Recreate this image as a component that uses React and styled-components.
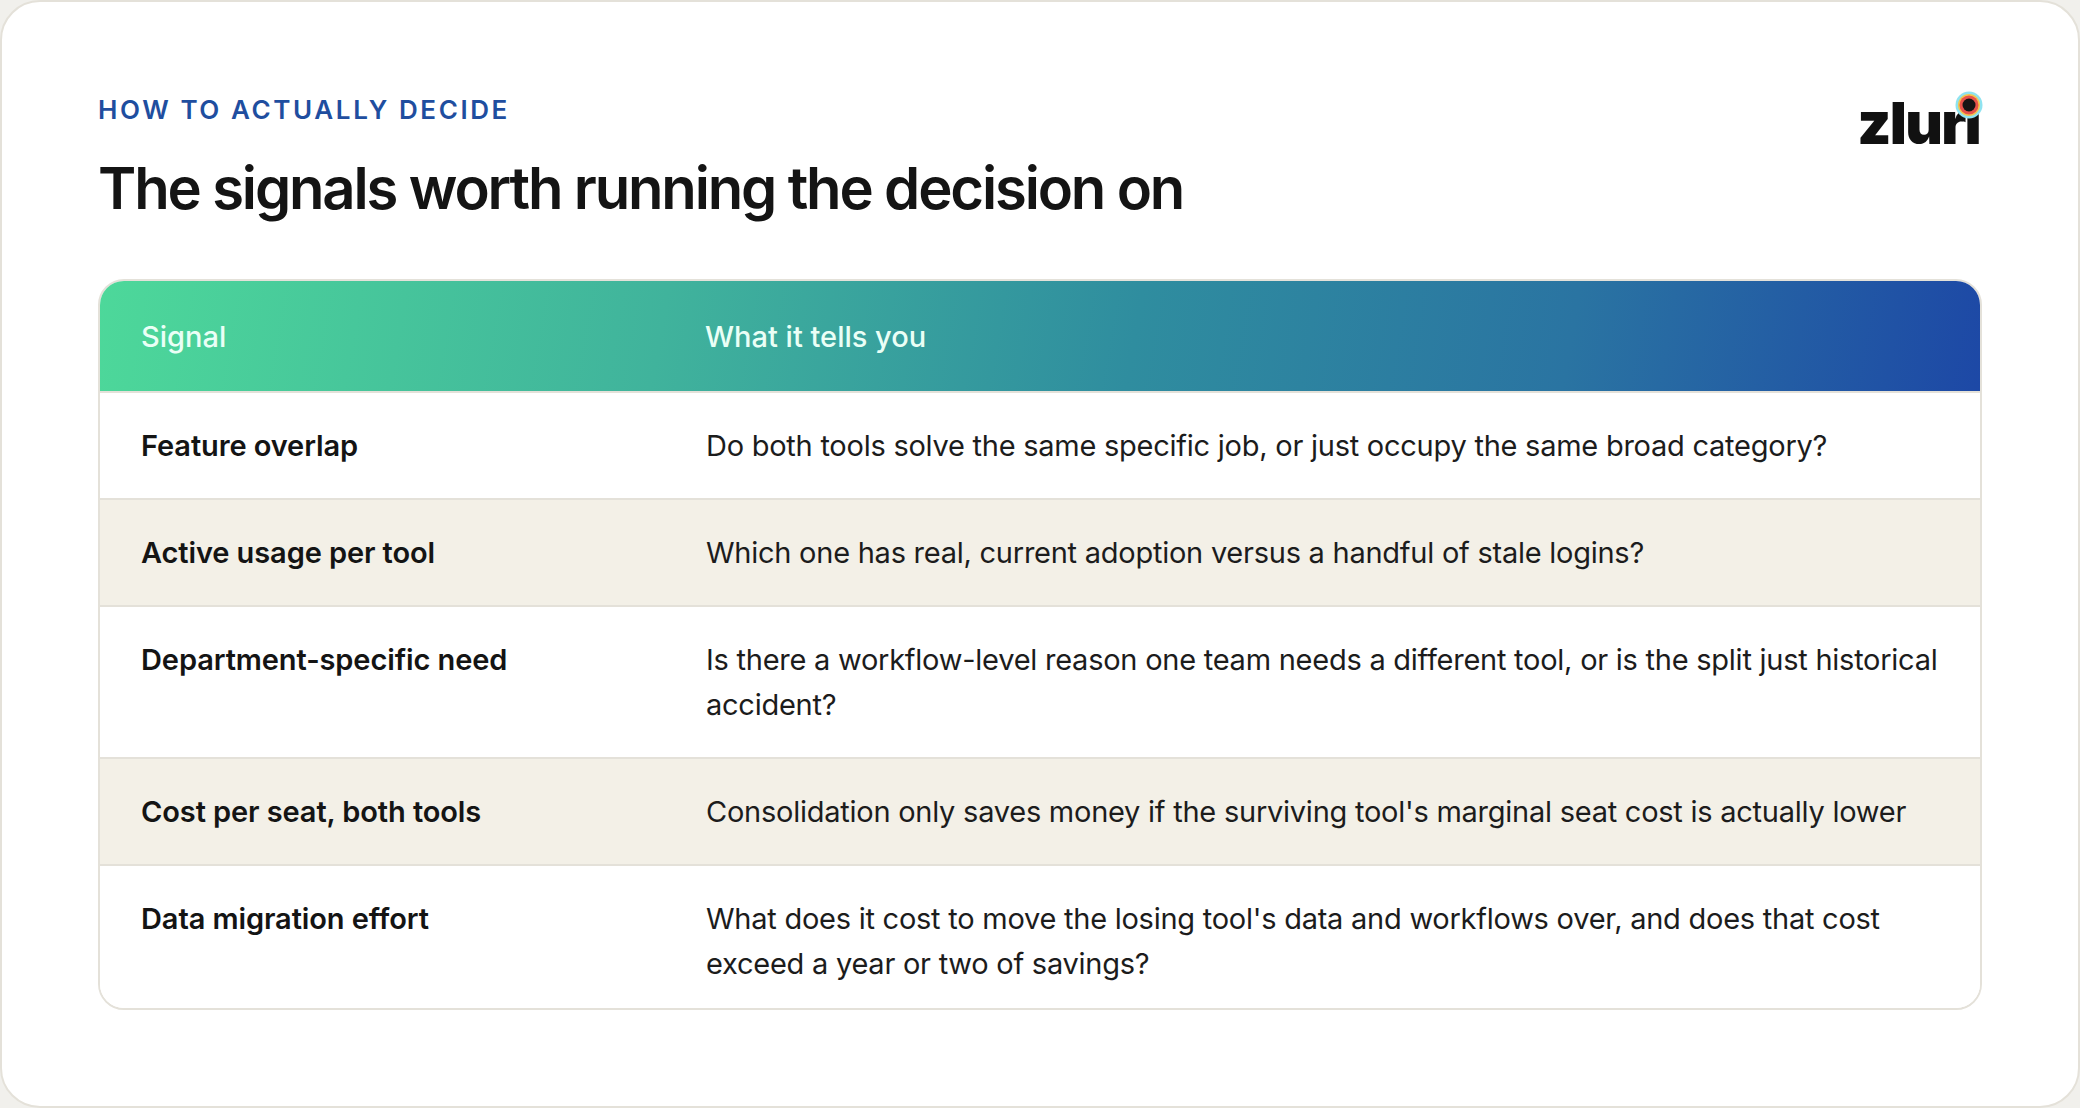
import React from "react";
import styled, { createGlobalStyle } from "styled-components";

const Global = createGlobalStyle`
  html, body { margin: 0; padding: 0; background: #f1f0ec; }
  body { font-family: Inter, "Noto Sans", sans-serif; -webkit-font-smoothing: antialiased; }
  * { box-sizing: border-box; }
`;

const Card = styled.div`
  height: 1108px;
  width: 2080px;
  background: #ffffff;
  border: 2px solid #e4e1d9;
  border-radius: 40px;
  padding: 95px 96px 96px 96px;
  display: flex;
  flex-direction: column;
`;

const Top = styled.div`
  display: flex;
  justify-content: space-between;
  align-items: flex-start;
`;

const Heading = styled.div`
  display: flex;
  flex-direction: column;
  gap: 36px;
`;

const Eyebrow = styled.div`
  font-family: Inter, sans-serif;
  font-size: 26px;
  line-height: 1;
  font-weight: 600;
  letter-spacing: 0.1em;
  color: #1f4e9f;
  text-transform: uppercase;
`;

const Title = styled.h1`
  margin: 0;
  font-family: Inter, sans-serif;
  font-size: 58px;
  line-height: 1;
  font-weight: 600;
  letter-spacing: -0.037em;
  color: #141414;
`;

const Logo = styled.div`
  position: relative;
  margin-top: -3px;
  font-family: Inter, sans-serif;
  font-size: 58px;
  line-height: 1;
  font-weight: 900;
  letter-spacing: -0.03em;
  color: #111111;
  padding-right: 2px;
`;

const Ring = styled.svg`
  position: absolute;
  top: -3px;
  right: -1px;
  width: 28px;
  height: 28px;
`;

const TableWrap = styled.div`
  margin-top: 62px;
  border: 2px solid #e4e1d9;
  border-radius: 26px;
  overflow: hidden;
  background: #ffffff;
`;

const Table = styled.table`
  width: 100%;
  border-collapse: separate;
  border-spacing: 0;
  table-layout: fixed;
`;

const HeadRow = styled.tr`
  background: linear-gradient(100deg, #4dd89a 0%, #40b39c 30%, #2f8d9f 55%, #2a74a2 78%, #1d48a6 100%);
`;

const Th = styled.th`
  text-align: left;
  padding: 33px 42px 32px 41px;
  font-family: Inter, sans-serif;
  font-size: 29px;
  line-height: 45px;
  font-weight: 500;
  color: #eafff6;
  width: ${(p) => p.$w || "auto"};
`;

const Row = styled.tr`
  background: ${(p) => (p.$alt ? "#f3f0e7" : "#ffffff")};
  & > td { border-top: 2px solid #e4e1d9; }
  &:last-child > td { padding-bottom: 38px; }
`;

const Label = styled.td`
  padding: 30px 42px 30px 41px;
  vertical-align: top;
  font-family: Inter, sans-serif;
  font-size: 29px;
  line-height: 45px;
  font-weight: 600;
  letter-spacing: -0.1px;
  color: #141414;
`;

const Desc = styled.td`
  padding: 30px 40px 30px 42px;
  vertical-align: top;
  font-family: Inter, sans-serif;
  font-size: 29px;
  line-height: 45px;
  font-weight: 400;
  letter-spacing: -0.25px;
  color: #1c1c1c;
`;

const rows = [
  ["Feature overlap", "Do both tools solve the same specific job, or just occupy the same broad category?"],
  ["Active usage per tool", "Which one has real, current adoption versus a handful of stale logins?"],
  ["Department-specific need", "Is there a workflow-level reason one team needs a different tool, or is the split just historical accident?"],
  ["Cost per seat, both tools", "Consolidation only saves money if the surviving tool's marginal seat cost is actually lower"],
  ["Data migration effort", "What does it cost to move the losing tool's data and workflows over, and does that cost exceed a year or two of savings?"],
];

export default function App() {
  return (
    <>
      <Global />
      <Card>
        <Top>
          <Heading>
            <Eyebrow>How to actually decide</Eyebrow>
            <Title>The signals worth running the decision on</Title>
          </Heading>
          <Logo>
            zlur&#305;
            <Ring viewBox="0 0 28 28" aria-hidden="true">
              <circle cx="14" cy="14" r="13.5" fill="#8fe3f0" />
              <circle cx="14" cy="14" r="11" fill="#f3c64f" />
              <circle cx="14" cy="14" r="9.5" fill="#e8524a" />
              <circle cx="14" cy="14" r="6.5" fill="#141414" />
            </Ring>
          </Logo>
        </Top>
        <TableWrap>
          <Table>
            <thead>
              <HeadRow>
                <Th $w="30%">Signal</Th>
                <Th>What it tells you</Th>
              </HeadRow>
            </thead>
            <tbody>
              {rows.map(([a, b], i) => (
                <Row key={a} $alt={i % 2 === 1}>
                  <Label>{a}</Label>
                  <Desc>{b}</Desc>
                </Row>
              ))}
            </tbody>
          </Table>
        </TableWrap>
      </Card>
    </>
  );
}
